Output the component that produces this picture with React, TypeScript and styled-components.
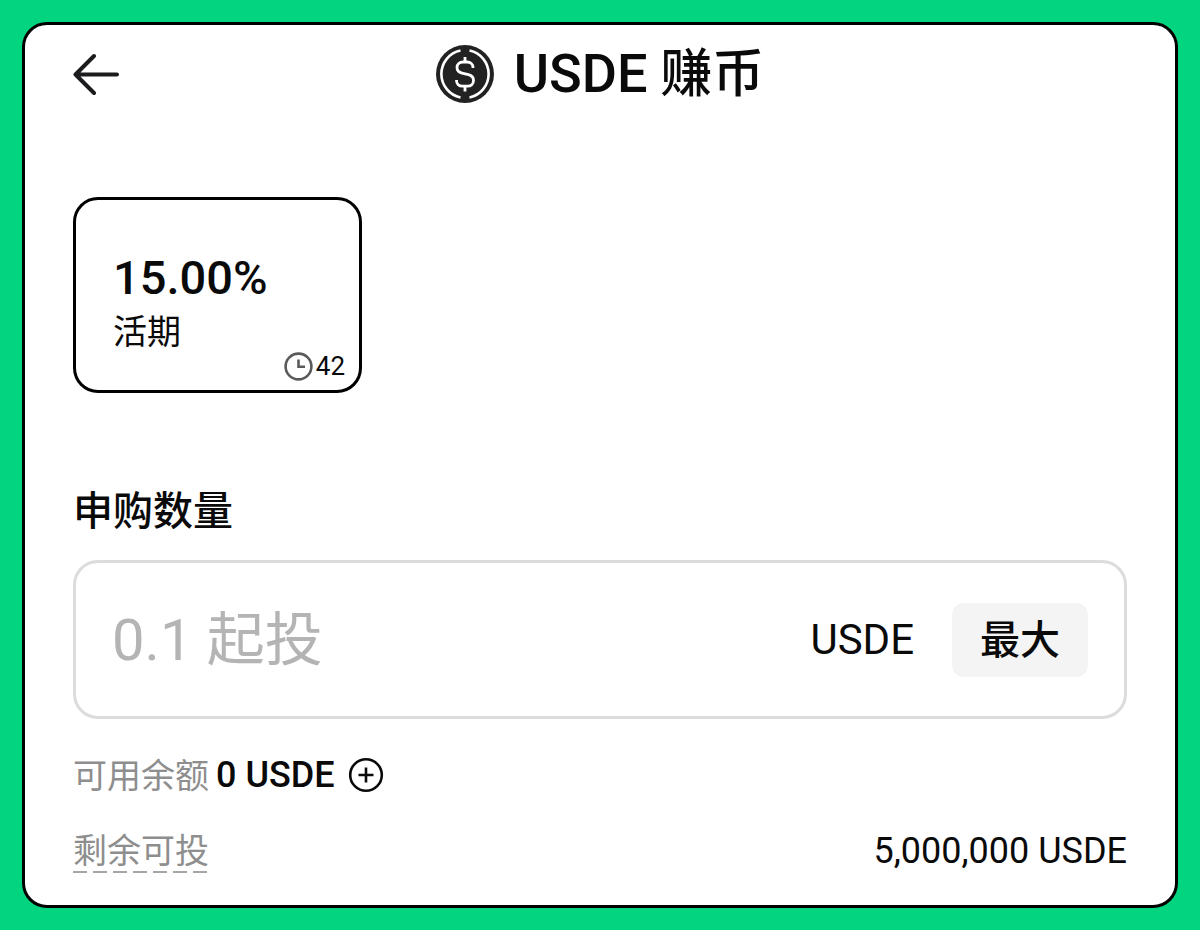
import React from "react";
import styled, { createGlobalStyle } from "styled-components";

const GlobalStyle = createGlobalStyle`
  * { box-sizing: border-box; }
  body {
    margin: 0;
    background: #02d47f;
    color: #0a0a0a;
    font-family: Roboto, "Noto Sans CJK SC", sans-serif;
  }
  button, input { font: inherit; color: inherit; }
`;

const Page = styled.div`
  padding: 22px;
`;

const Sheet = styled.main`
  background: #fff;
  border: 3px solid #000;
  border-radius: 25px;
  padding: 0 48px 34px;
`;

const Header = styled.header`
  display: grid;
  grid-template-columns: 1fr auto 1fr;
  align-items: center;
  height: 98px;
`;

const IconButton = styled.button`
  display: flex;
  justify-self: start;
  padding: 0;
  border: 0;
  background: none;
  cursor: pointer;
`;

const Title = styled.h1`
  display: flex;
  align-items: center;
  gap: 20px;
  margin: 0;
  font-size: 52px;
  line-height: 60px;
  font-weight: 500;
`;

const Ticker = styled.span`
  font-size: 54px;
`;

const Plan = styled.button`
  display: flex;
  flex-direction: column;
  align-items: flex-start;
  width: 289px;
  height: 196px;
  margin-top: 74px;
  padding: 48px 14px 12px 37px;
  border: 3px solid #000;
  border-radius: 25px;
  background: #fff;
  text-align: left;
  cursor: pointer;
`;

const Rate = styled.span`
  font-size: 47px;
  line-height: 60px;
  font-weight: 500;
`;

const Term = styled.span`
  font-size: 34px;
  line-height: 48px;
`;

const Countdown = styled.span`
  display: flex;
  align-items: center;
  align-self: flex-end;
  gap: 3px;
  height: 20px;
  font-size: 26px;
  line-height: 24px;
`;

const FieldLabel = styled.label`
  display: block;
  margin: 94px 0 23px;
  font-size: 40px;
  line-height: 50px;
  font-weight: 500;
`;

const Field = styled.div`
  display: flex;
  align-items: center;
  gap: 38px;
  height: 159px;
  padding: 0 36px;
  border: 3px solid #dcdcdc;
  border-radius: 25px;
`;

const AmountInput = styled.input`
  flex: 1;
  min-width: 0;
  height: 84px;
  padding: 0;
  border: 0;
  outline: 0;
  background: none;
  font-size: 58px;
  &::placeholder { color: #b4b4b4; opacity: 1; }
`;

const Unit = styled.span`
  font-size: 42px;
  line-height: 50px;
`;

const MaxButton = styled.button`
  height: 74px;
  padding: 2px 28px 0;
  border: 0;
  border-radius: 12px;
  background: #f4f4f4;
  font-size: 40px;
  line-height: 50px;
  font-weight: 500;
  cursor: pointer;
`;

const InfoRow = styled.div`
  display: flex;
  align-items: center;
  height: 40px;
  margin-top: 36px;
  font-size: 36px;
  line-height: 40px;
`;

const Muted = styled.span`
  padding-top: 2px;
  color: #8e8e8e;
  font-size: 34px;
`;

const Balance = styled.span`
  margin: 0 13px 0 7px;
  font-weight: 500;
`;

const Hint = styled(Muted)`
  padding-bottom: 2px;
  background: repeating-linear-gradient(90deg, #a6a6a6 0 14px, transparent 14px 20px) left bottom / 100% 2px no-repeat;
`;

const Remaining = styled.span`
  margin-left: auto;
`;

const ArrowIcon = () => (
  <svg width="48" height="44" viewBox="0 0 48 44" fill="none" stroke="#1c1c1e" strokeWidth="4" strokeLinecap="round" strokeLinejoin="round" aria-hidden="true">
    <path d="M44 22.500H2.500M21 4L2.500 22.500L21 41" />
  </svg>
);

const CoinIcon = () => (
  <svg width="58" height="58" viewBox="0 0 58 58" fill="none" stroke="#fff" aria-hidden="true">
    <circle cx="29" cy="29" r="29" fill="#222" stroke="none" />
    <path d="M24.500 5.500A24 24 0 0 0 24.500 52.500M33.500 5.500A24 24 0 0 1 33.500 52.500" strokeWidth="2.600" />
    <path d="M37 23V22.500C37 19 34.500 17 31 17H27C23.500 17 21 19 21 22.500C21 26 23 27.300 26 28.100L32.500 29.700C35.500 30.500 37.500 32 37.500 35.500C37.500 39 35 41.200 31.500 41.200H26.500C23 41.200 20.500 39 20.500 35.500V35M29 12V17M29 41.200V46.500" strokeWidth="2.800" />
  </svg>
);

const ClockIcon = () => (
  <svg width="29" height="29" viewBox="0 0 29 29" fill="none" stroke="#5a5a5a" strokeWidth="2.600" aria-hidden="true">
    <circle cx="14.500" cy="14.500" r="12.900" />
    <path d="M14.500 7.500V14.800H21" />
  </svg>
);

const PlusCircleIcon = () => (
  <svg width="36" height="36" viewBox="0 0 36 36" fill="none" stroke="#0a0a0a" strokeWidth="2.600" aria-hidden="true">
    <circle cx="18" cy="18" r="15.800" />
    <path d="M18 10.500V25.500M10.500 18H25.500" />
  </svg>
);

export default function App() {
  return (
    <>
      <GlobalStyle />
      <Page>
        <Sheet>
          <Header>
            <IconButton type="button" aria-label="返回">
              <ArrowIcon />
            </IconButton>
            <Title>
              <CoinIcon />
              <span>
                <Ticker>USDE</Ticker> 赚币
              </span>
            </Title>
          </Header>
          <Plan type="button">
            <Rate>15.00%</Rate>
            <Term>活期</Term>
            <Countdown>
              <ClockIcon />
              42
            </Countdown>
          </Plan>
          <FieldLabel htmlFor="amount">申购数量</FieldLabel>
          <Field>
            <AmountInput id="amount" type="text" inputMode="decimal" placeholder="0.1 起投" />
            <Unit>USDE</Unit>
            <MaxButton type="button">最大</MaxButton>
          </Field>
          <InfoRow>
            <Muted>可用余额</Muted>
            <Balance>0 USDE</Balance>
            <IconButton type="button" aria-label="充值">
              <PlusCircleIcon />
            </IconButton>
          </InfoRow>
          <InfoRow>
            <Hint>剩余可投</Hint>
            <Remaining>5,000,000 USDE</Remaining>
          </InfoRow>
        </Sheet>
      </Page>
    </>
  );
}
